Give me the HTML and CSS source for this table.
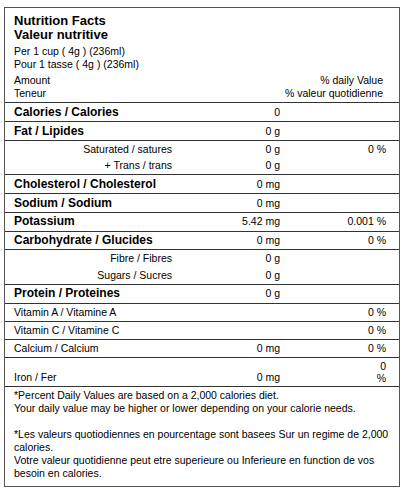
FILE: index.html
```html
<!DOCTYPE html>
<html lang="en">
<head>
  <meta charset="UTF-8">
  <meta name="viewport" content="width=device-width, initial-scale=1.0">
  <title>Nutrition Facts</title>
  <link rel="stylesheet" href="styles.css">
</head>
<body>

  <div class="nutrition-label">

    <div class="label-header">
      <h1 class="label-title">Nutrition Facts<br>Valeur nutritive</h1>
      <p class="serving">Per 1 cup ( 4g ) (236ml)<br>Pour 1 tasse ( 4g ) (236ml)</p>
      <div class="column-titles">
        <span>Amount<br>Teneur</span>
        <span class="dv-title">% daily Value<br>% valeur quotidienne</span>
      </div>
    </div>

    <table class="nutrients">
      <colgroup>
        <col class="col-name">
        <col class="col-amount">
        <col class="col-dv">
      </colgroup>
      <tbody>
        <tr class="main"><td>Calories / Calories</td><td>0</td><td></td></tr>
        <tr class="main"><td>Fat / Lipides</td><td>0 g</td><td></td></tr>
        <tr class="sub"><td>Saturated / satures</td><td>0 g</td><td>0 %</td></tr>
        <tr class="sub"><td>+ Trans / trans</td><td>0 g</td><td></td></tr>
        <tr class="main"><td>Cholesterol / Cholesterol</td><td>0 mg</td><td></td></tr>
        <tr class="main"><td>Sodium / Sodium</td><td>0 mg</td><td></td></tr>
        <tr class="main"><td>Potassium</td><td>5.42 mg</td><td>0.001 %</td></tr>
        <tr class="main"><td>Carbohydrate / Glucides</td><td>0 mg</td><td>0 %</td></tr>
        <tr class="sub"><td>Fibre / Fibres</td><td>0 g</td><td></td></tr>
        <tr class="sub"><td>Sugars / Sucres</td><td>0 g</td><td></td></tr>
        <tr class="main"><td>Protein / Proteines</td><td>0 g</td><td></td></tr>
        <tr class="vitamin"><td>Vitamin A / Vitamine A</td><td></td><td>0 %</td></tr>
        <tr class="vitamin"><td>Vitamin C / Vitamine C</td><td></td><td>0 %</td></tr>
        <tr class="vitamin"><td>Calcium / Calcium</td><td>0 mg</td><td>0 %</td></tr>
        <tr class="vitamin iron"><td>Iron / Fer</td><td>0 mg</td><td>0<br>%</td></tr>
      </tbody>
    </table>

    <div class="label-footer">
      <p>*Percent Daily Values are based on a 2,000 calories diet.<br>Your daily value may be higher or lower depending on your calorie needs.</p>
      <p>*Les valeurs quotiodiennes en pourcentage sont basees Sur un regime de 2,000 calories.<br>Votre valeur quotidienne peut etre superieure ou Inferieure en function de vos besoin en calories.</p>
    </div>

  </div>

</body>
</html>
```

FILE: styles.css
```css
body {
  font-family: 'Liberation Sans', Arial, Helvetica, sans-serif;
  background-color: #fff;
  color: #000;
  margin: 0;
  padding: 0;
}

.nutrition-label {
  margin: 7px 5px 0 4px;
  border: 1.5px solid #555;
}

.label-header {
  padding: 6px 16px 2px 9px;
  font-size: 10.5px;
  line-height: 12.5px;
}

.label-title {
  margin: 0;
  font-size: 13px;
  line-height: 13.5px;
  font-weight: bold;
}

.serving {
  margin: 4px 0 0;
}

.column-titles {
  display: flex;
  justify-content: space-between;
  margin-top: 4px;
  line-height: 13px;
}

.dv-title {
  text-align: right;
}

table.nutrients {
  width: 100%;
  border-collapse: collapse;
  table-layout: fixed;
  font-size: 10.5px;
}

.col-name {
  width: 170px;
}

.col-amount {
  width: 105px;
}

.nutrients tr {
  border-top: 1px solid #333;
}

.nutrients td {
  padding: 2px 0;
  line-height: 13px;
  text-align: right;
  vertical-align: bottom;
  white-space: nowrap;
}

.nutrients td:first-child {
  text-align: left;
  padding-left: 9px;
  padding-right: 3px;
}

.nutrients td:last-child {
  padding-right: 13px;
}

.main td {
  padding-top: 2.7px;
  padding-bottom: 2.2px;
}

.main td:first-child {
  font-size: 12px;
  font-weight: bold;
}

.sub td {
  padding-top: 2px;
  padding-bottom: 1.6px;
}

.sub td:first-child {
  text-align: right;
}

.sub + .sub {
  border-top: none;
}

.iron td:last-child {
  line-height: 12px;
}

.label-footer {
  border-top: 1px solid #333;
  padding: 2px 9px 6px;
  font-size: 10.5px;
  line-height: 13px;
}

.label-footer p {
  margin: 0 0 13px;
}

.label-footer p:last-child {
  margin-bottom: 0;
}
```
